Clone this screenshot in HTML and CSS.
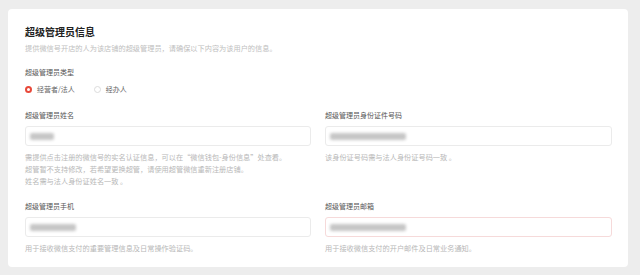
FILE: index.html
```html
<!DOCTYPE html>
<html lang="zh-CN">
<head>
<meta charset="utf-8">
<title>超级管理员信息</title>
<link rel="stylesheet" href="styles.css">
</head>
<body>
<div class="card">
  <h1 class="title">超级管理员信息</h1>
  <p class="subtitle">提供微信号开店的人为该店铺的超级管理员，请确保以下内容为该用户的信息。</p>
  <div class="label type-label">超级管理员类型</div>
  <div class="radios">
    <label class="radio"><span class="dot on"></span>经营者/法人</label>
    <label class="radio"><span class="dot"></span>经办人</label>
  </div>
  <div class="grid">
    <div class="field">
      <div class="label">超级管理员姓名</div>
      <div class="input"><span class="blur short"></span></div>
      <div class="help">需提供点击注册的微信号的实名认证信息，可以在“微信钱包-身份信息”处查看。<br>超管暂不支持修改，若希望更换超管，请使用超管微信重新注册店铺。<br>姓名需与法人身份证姓名一致 。</div>
    </div>
    <div class="field">
      <div class="label">超级管理员身份证件号码</div>
      <div class="input"><span class="blur long"></span></div>
      <div class="help">该身份证号码需与法人身份证号码一致 。</div>
    </div>
    <div class="field">
      <div class="label">超级管理员手机</div>
      <div class="input"><span class="blur mid"></span></div>
      <div class="help">用于接收微信支付的重要管理信息及日常操作验证码。</div>
    </div>
    <div class="field">
      <div class="label">超级管理员邮箱</div>
      <div class="input warn"><span class="blur long"></span></div>
      <div class="help">用于接收微信支付的开户邮件及日常业务通知。</div>
    </div>
  </div>
</div>
</body>
</html>
```

FILE: styles.css
```css
* { box-sizing: border-box; }
html, body { margin: 0; padding: 0; }
body {
  background: #ededed;
  padding: 9px 12px 8px 8px;
  font-family: "Noto Sans CJK SC", "Noto Sans", sans-serif;
  color: #333;
}
.card {
  background: #fff;
  border-radius: 4px;
  height: 258px;
  padding: 17px 16px 0 17px;
}
.title {
  margin: 0;
  font-size: 10px;
  line-height: 12px;
  font-weight: 700;
  color: #222;
}
.subtitle {
  margin: 5px 0 0;
  font-size: 7.2px;
  line-height: 10px;
  color: #c0c0c0;
}
.label {
  font-size: 7px;
  line-height: 10px;
  color: #555;
}
.type-label { margin-top: 14px; }
.radios {
  display: flex;
  gap: 19px;
  margin-top: 7px;
  height: 10px;
  align-items: center;
}
.radio {
  display: flex;
  align-items: center;
  gap: 5px;
  font-size: 7px;
  line-height: 10px;
  color: #666;
}
.dot {
  width: 7px;
  height: 7px;
  border-radius: 50%;
  border: 1px solid #dcdcdc;
  background: #fff;
}
.dot.on { border: 2px solid #e8493a; }
.grid {
  margin-top: 16px;
  display: grid;
  grid-template-columns: 286px 287px;
  column-gap: 14px;
  row-gap: 14px;
}
.input {
  margin-top: 6px;
  height: 20px;
  border: 1px solid #ebebeb;
  border-radius: 3px;
  display: flex;
  align-items: center;
  padding-left: 4px;
}
.input.warn { border-color: #f6dada; }
.blur {
  height: 7px;
  background: #c6c6c6;
  filter: blur(1.5px);
  border-radius: 2px;
}
.blur.short { width: 24px; }
.blur.mid { width: 46px; }
.blur.long { width: 76px; }
.help {
  margin-top: 5px;
  font-size: 7.2px;
  line-height: 12px;
  color: #b8b8b8;
}
```
